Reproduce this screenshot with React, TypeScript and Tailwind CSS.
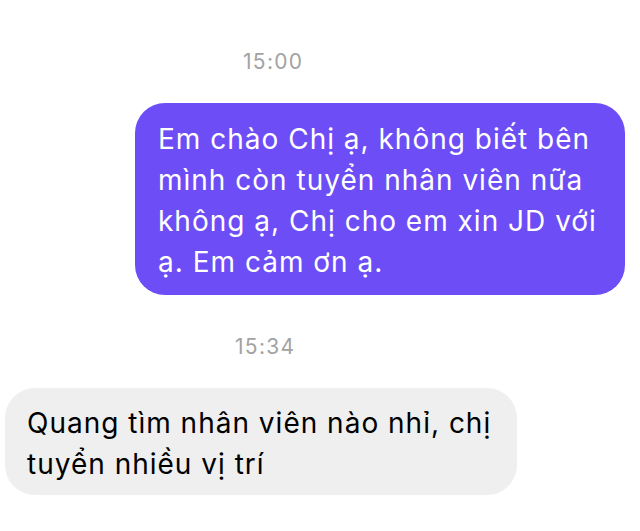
export default function App() {
  return (
    <div className="w-[640px] h-[531px] overflow-hidden bg-white font-['Inter','Liberation_Sans',sans-serif]">
      <div className="pt-[50px] pl-[243px] text-[21px] leading-[24px] tracking-[1.3px] text-[#a3a3a3]">15:00</div>

      <div className="mt-[29px] flex justify-end pr-[15px]">
        <div className="w-[490px] h-[192px] rounded-[30px] bg-[#6c4df6] pl-[23px] pt-[16px] text-[28px] leading-[41px] tracking-[1px] text-white">
          Em chào Chị ạ, không biết bên
          <br />
          mình còn tuyển nhân viên nữa
          <br />
          không ạ, Chị cho em xin JD với
          <br />
          ạ. Em cảm ơn ạ.
        </div>
      </div>

      <div className="mt-[40px] pl-[235px] text-[21px] leading-[24px] tracking-[1.3px] text-[#a3a3a3]">15:34</div>

      <div className="mt-[29px] ml-[5px] w-[512px] h-[107px] rounded-[30px] bg-[#efefef] pl-[22px] pt-[15px] text-[28px] leading-[41px] tracking-[1px] text-black">
        Quang tìm nhân viên nào nhỉ, chị
        <br />
        tuyển nhiều vị trí
      </div>
    </div>
  );
}
